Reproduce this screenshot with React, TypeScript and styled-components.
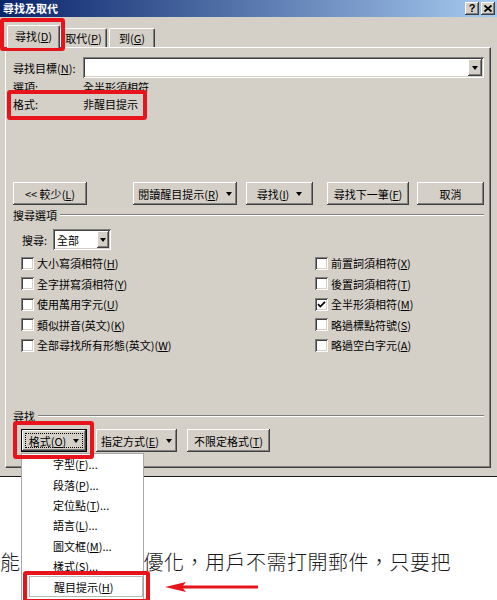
import React from 'react';
import styled, { createGlobalStyle, css } from 'styled-components';

const GlobalStyle = createGlobalStyle`
  html, body { margin: 0; padding: 0; background: #ffffff; }
  body { width: 497px; height: 600px; overflow: hidden; }
  #root { width: 497px; height: 600px; }
`;

const UI = css`
  font-family: "Noto Sans CJK TC", "Liberation Sans", sans-serif;
  font-size: 11px;
  line-height: 16px;
  color: #000;
`;

const raised = css`
  box-shadow: inset -1px -1px #404040, inset 1px 1px #ffffff,
    inset -2px -2px #808080, inset 2px 2px #d4d0c8;
`;

const sunken = css`
  box-shadow: inset 1px 1px #808080, inset -1px -1px #ffffff,
    inset 2px 2px #404040, inset -2px -2px #d4d0c8;
`;

const RED = '#e8141c';

const Page = styled.div`
  position: relative;
  width: 497px;
  height: 600px;
  overflow: hidden;
  background: #fff;
  ${UI}
`;

const Dialog = styled.div`
  box-sizing: border-box;
  height: 477px;
  background: #d4d0c8;
  border-bottom: 1px solid #1a1a1a;
  display: flex;
  flex-direction: column;
`;

const TitleBar = styled.div`
  height: 17px;
  display: flex;
  align-items: center;
  justify-content: space-between;
  padding: 0 2px 0 3px;
  background: linear-gradient(90deg, #0a246a 0%, #a6caf0 100%);
`;

const Title = styled.div`
  font-family: "Noto Sans CJK TC", "Liberation Sans", sans-serif;
  font-size: 11px;
  font-weight: 700;
  line-height: 17px;
  color: #fff;
`;

const TitleButtons = styled.div`
  display: flex;
  gap: 2px;
`;

const TitleButton = styled.div`
  box-sizing: border-box;
  width: 14px;
  height: 13px;
  background: #d4d0c8;
  ${raised}
  display: flex;
  align-items: center;
  justify-content: center;
  font-family: "Liberation Sans", sans-serif;
  font-weight: 700;
  font-size: 11px;
  line-height: 13px;
  color: #000;
`;

const Body = styled.div`
  display: flex;
  flex-direction: column;
  padding: 0 6px 0 5px;
`;

const TabStrip = styled.div`
  height: 22px;
  margin-top: 8px;
  padding-left: 2px;
  display: flex;
  align-items: flex-start;
`;

const Tab = styled.div<{ $active?: boolean; $w: number; $ml?: number }>`
  box-sizing: border-box;
  width: ${(p) => p.$w}px;
  margin-left: ${(p) => p.$ml ?? 0}px;
  display: flex;
  align-items: center;
  justify-content: center;
  background: #d4d0c8;
  border-top: 1px solid #fff;
  border-left: 1px solid #fff;
  border-right: 1px solid #404040;
  border-radius: 2px 2px 0 0;
  box-shadow: inset -1px 0 #808080;
  ${(p) =>
    p.$active
      ? css`
          height: 23px;
          position: relative;
          z-index: 1;
          padding-bottom: 3px;
        `
      : css`
          height: 19px;
          margin-top: 3px;
        `}
`;

const TabPanel = styled.div`
  box-sizing: border-box;
  width: 486px;
  height: 421px;
  border-top: 1px solid #fff;
  border-left: 1px solid #fff;
  border-right: 1px solid #404040;
  border-bottom: 1px solid #404040;
  box-shadow: inset -1px -1px #808080;
  padding: 0 6px 0 7px;
  display: flex;
  flex-direction: column;
`;

const FindRow = styled.div`
  margin-top: 9px;
  height: 21px;
  display: flex;
  align-items: center;
`;

const Label = styled.div<{ $w?: number }>`
  width: ${(p) => (p.$w ? `${p.$w}px` : 'auto')};
  flex: none;
  white-space: nowrap;
`;

const Field = styled.div<{ $w?: number }>`
  box-sizing: border-box;
  height: 21px;
  ${(p) => (p.$w ? `width: ${p.$w}px;` : 'flex: 1;')}
  background: #fff;
  ${sunken}
  padding: 2px 2px 2px 4px;
  display: flex;
  align-items: center;
  justify-content: space-between;
`;

const DropButton = styled.div<{ $w: number }>`
  box-sizing: border-box;
  width: ${(p) => p.$w}px;
  height: 17px;
  background: #d4d0c8;
  ${raised}
  display: flex;
  align-items: center;
  justify-content: center;
`;

const Caret = styled.span`
  display: inline-block;
  width: 0;
  height: 0;
  border-left: 3.5px solid transparent;
  border-right: 3.5px solid transparent;
  border-top: 4px solid #000;
`;

const InfoRow = styled.div`
  margin-top: 1px;
  height: 16px;
  display: flex;
`;

const ButtonRow = styled.div<{ $mt: number }>`
  margin-top: ${(p) => p.$mt}px;
  height: 23px;
  display: flex;
`;

const Button = styled.div<{ $w: number; $ml?: number; $focus?: boolean }>`
  box-sizing: border-box;
  position: relative;
  width: ${(p) => p.$w}px;
  height: 23px;
  margin-left: ${(p) => p.$ml ?? 0}px;
  background: #d4d0c8;
  ${raised}
  display: flex;
  align-items: center;
  justify-content: center;
  gap: 7px;
  white-space: nowrap;
  ${(p) =>
    p.$focus &&
    css`
      border: 1px solid #000;
      &::after {
        content: '';
        position: absolute;
        inset: 3px;
        border: 1px dotted #000;
      }
    `}
`;

const GroupHeader = styled.div<{ $mt: number }>`
  margin-top: ${(p) => p.$mt}px;
  height: 16px;
  display: flex;
  align-items: center;
  gap: 3px;
`;

const Etched = styled.div`
  flex: 1;
  height: 0;
  border-top: 1px solid #808080;
  border-bottom: 1px solid #ffffff;
`;

const SearchRow = styled.div`
  margin-top: 6px;
  height: 21px;
  padding-left: 9px;
  display: flex;
  align-items: center;
`;

const CheckGrid = styled.div`
  margin-top: 3px;
  padding-left: 8px;
  display: grid;
  grid-template-columns: 294px 1fr;
  grid-auto-flow: column;
  grid-template-rows: repeat(5, 20.5px);
`;

const CheckItem = styled.div`
  display: flex;
  align-items: center;
  gap: 3px;
  white-space: nowrap;
`;

const Box = styled.div`
  box-sizing: border-box;
  width: 13px;
  height: 13px;
  background: #fff;
  ${sunken}
  display: flex;
  align-items: center;
  justify-content: center;
`;

const PageText = styled.div`
  padding-top: 73px;
  display: flex;
  font-family: "Noto Sans CJK TC", "Noto Sans", sans-serif;
  font-weight: 300;
  font-size: 20px;
  line-height: 24px;
  letter-spacing: 0.5px;
  color: #1a1a1a;
  white-space: nowrap;
`;

const Hidden = styled.span<{ $w: number }>`
  display: inline-block;
  width: ${(p) => p.$w}px;
  flex: none;
`;

const Menu = styled.div`
  position: absolute;
  left: 21px;
  top: 453px;
  width: 123px;
  height: 160px;
  box-sizing: border-box;
  background: #fff;
  border: 1px solid #a8a8a8;
  border-bottom: none;
  display: flex;
  flex-direction: column;
`;

const MenuItem = styled.div<{ $hl?: boolean }>`
  box-sizing: border-box;
  height: 20.4px;
  padding-left: 31px;
  display: flex;
  align-items: center;
  white-space: nowrap;
  ${(p) =>
    p.$hl &&
    css`
      margin: 0 0 0 7px;
      padding-left: 24px;
      border: 1px solid #b8b8b8;
    `}
`;

const RedBox = styled.div<{ $x: number; $y: number; $w: number; $h: number }>`
  position: absolute;
  left: ${(p) => p.$x}px;
  top: ${(p) => p.$y}px;
  width: ${(p) => p.$w}px;
  height: ${(p) => p.$h}px;
  box-sizing: border-box;
  border: 4px solid ${RED};
  border-radius: 3px;
  pointer-events: none;
`;

const Arrow = styled.svg`
  position: absolute;
  left: 164px;
  top: 580px;
`;

const K = styled.u`
  text-decoration: underline;
  text-underline-offset: 1px;
`;

type Opt = { label: string; key: string; checked?: boolean };

const leftOpts: Opt[] = [
  { label: '大小寫須相符', key: 'H' },
  { label: '全字拼寫須相符', key: 'Y' },
  { label: '使用萬用字元', key: 'U' },
  { label: '類似拼音(英文)', key: 'K' },
  { label: '全部尋找所有形態(英文)', key: 'W' },
];

const rightOpts: Opt[] = [
  { label: '前置詞須相符', key: 'X' },
  { label: '後置詞須相符', key: 'T' },
  { label: '全半形須相符', key: 'M', checked: true },
  { label: '略過標點符號', key: 'S' },
  { label: '略過空白字元', key: 'A' },
];

const menuItems = [
  { label: '字型', key: 'F', dots: true },
  { label: '段落', key: 'P', dots: true },
  { label: '定位點', key: 'T', dots: true },
  { label: '語言', key: 'L', dots: true },
  { label: '圖文框', key: 'M', dots: true },
  { label: '樣式', key: 'S', dots: true },
  { label: '醒目提示', key: 'H', dots: false, hl: true },
];

const Acc = ({ text, k, after = '' }: { text: string; k: string; after?: string }) => (
  <span>
    {text}(<K>{k}</K>){after}
  </span>
);

const Check = () => (
  <svg width="9" height="9" viewBox="0 0 9 9">
    <polyline points="1,4.2 3.3,6.6 8,1.8" fill="none" stroke="#000" strokeWidth="1.7" />
  </svg>
);

const CheckRow = ({ o }: { o: Opt }) => (
  <CheckItem>
    <Box>{o.checked && <Check />}</Box>
    <Acc text={o.label} k={o.key} />
  </CheckItem>
);

export default function App() {
  return (
    <Page>
      <GlobalStyle />
      <Dialog>
        <TitleBar>
          <Title>尋找及取代</Title>
          <TitleButtons>
            <TitleButton>?</TitleButton>
            <TitleButton>
              <svg width="8" height="7" viewBox="0 0 8 7">
                <path d="M0.5 0.5 L7.5 6.5 M7.5 0.5 L0.5 6.5" stroke="#000" strokeWidth="1.8" />
              </svg>
            </TitleButton>
          </TitleButtons>
        </TitleBar>
        <Body>
          <TabStrip>
            <Tab $active $w={53}>
              <Acc text="尋找" k="D" />
            </Tab>
            <Tab $w={47}>
              <Acc text="取代" k="P" />
            </Tab>
            <Tab $w={46} $ml={2}>
              <Acc text="到" k="G" />
            </Tab>
          </TabStrip>
          <TabPanel>
            <FindRow>
              <Label $w={70}>
                <Acc text="尋找目標" k="N" after=":" />
              </Label>
              <Field>
                <span />
                <DropButton $w={14}>
                  <Caret />
                </DropButton>
              </Field>
            </FindRow>
            <InfoRow>
              <Label $w={70}>選項:</Label>
              <Label>全半形須相符</Label>
            </InfoRow>
            <InfoRow>
              <Label $w={70}>格式:</Label>
              <Label>非醒目提示</Label>
            </InfoRow>
            <ButtonRow $mt={70}>
              <Button $w={74}>
                <Acc text="<< 較少" k="L" />
              </Button>
              <Button $w={104} $ml={46}>
                <Acc text="閱讀醒目提示" k="R" />
                <Caret />
              </Button>
              <Button $w={67} $ml={9}>
                <Acc text="尋找" k="I" />
                <Caret />
              </Button>
              <Button $w={82} $ml={14}>
                <Acc text="尋找下一筆" k="F" />
              </Button>
              <Button $w={67} $ml={8}>
                取消
              </Button>
            </ButtonRow>
            <GroupHeader $mt={2}>
              <Label>搜尋選項</Label>
              <Etched />
            </GroupHeader>
            <SearchRow>
              <Label $w={31}>搜尋:</Label>
              <Field $w={58}>
                <span>全部</span>
                <DropButton $w={12}>
                  <Caret />
                </DropButton>
              </Field>
            </SearchRow>
            <CheckGrid>
              {leftOpts.map((o) => (
                <CheckRow key={o.key} o={o} />
              ))}
              {rightOpts.map((o) => (
                <CheckRow key={o.key} o={o} />
              ))}
            </CheckGrid>
            <GroupHeader $mt={52.5}>
              <Label>尋找</Label>
              <Etched />
            </GroupHeader>
            <ButtonRow $mt={5}>
              <Button $w={66} $ml={8} $focus>
                <Acc text="格式" k="O" />
                <Caret />
              </Button>
              <Button $w={81} $ml={9}>
                <Acc text="指定方式" k="E" />
                <Caret />
              </Button>
              <Button $w={83} $ml={10}>
                <Acc text="不限定格式" k="T" />
              </Button>
            </ButtonRow>
          </TabPanel>
        </Body>
      </Dialog>
      <PageText>
        <span>能</span>
        <Hidden $w={123} />
        <span>優化，用戶不需打開郵件，只要把</span>
      </PageText>

      <Menu>
        {menuItems.map((m) => (
          <MenuItem key={m.label} $hl={m.hl}>
            <Acc text={m.label} k={m.key} after={m.dots ? '...' : ''} />
          </MenuItem>
        ))}
      </Menu>

      <RedBox $x={0} $y={18} $w={65} $h={33} />
      <RedBox $x={7} $y={90} $w={140} $h={30} />
      <RedBox $x={13} $y={421} $w={81} $h={38} />
      <RedBox $x={23} $y={571} $w={127} $h={32} />

      <Arrow width="96" height="14" viewBox="0 0 96 14">
        <line x1="14" y1="7" x2="94" y2="7" stroke={RED} strokeWidth="3" />
        <polygon points="1,7 22,2 18,7 22,12" fill={RED} />
      </Arrow>
    </Page>
  );
}
